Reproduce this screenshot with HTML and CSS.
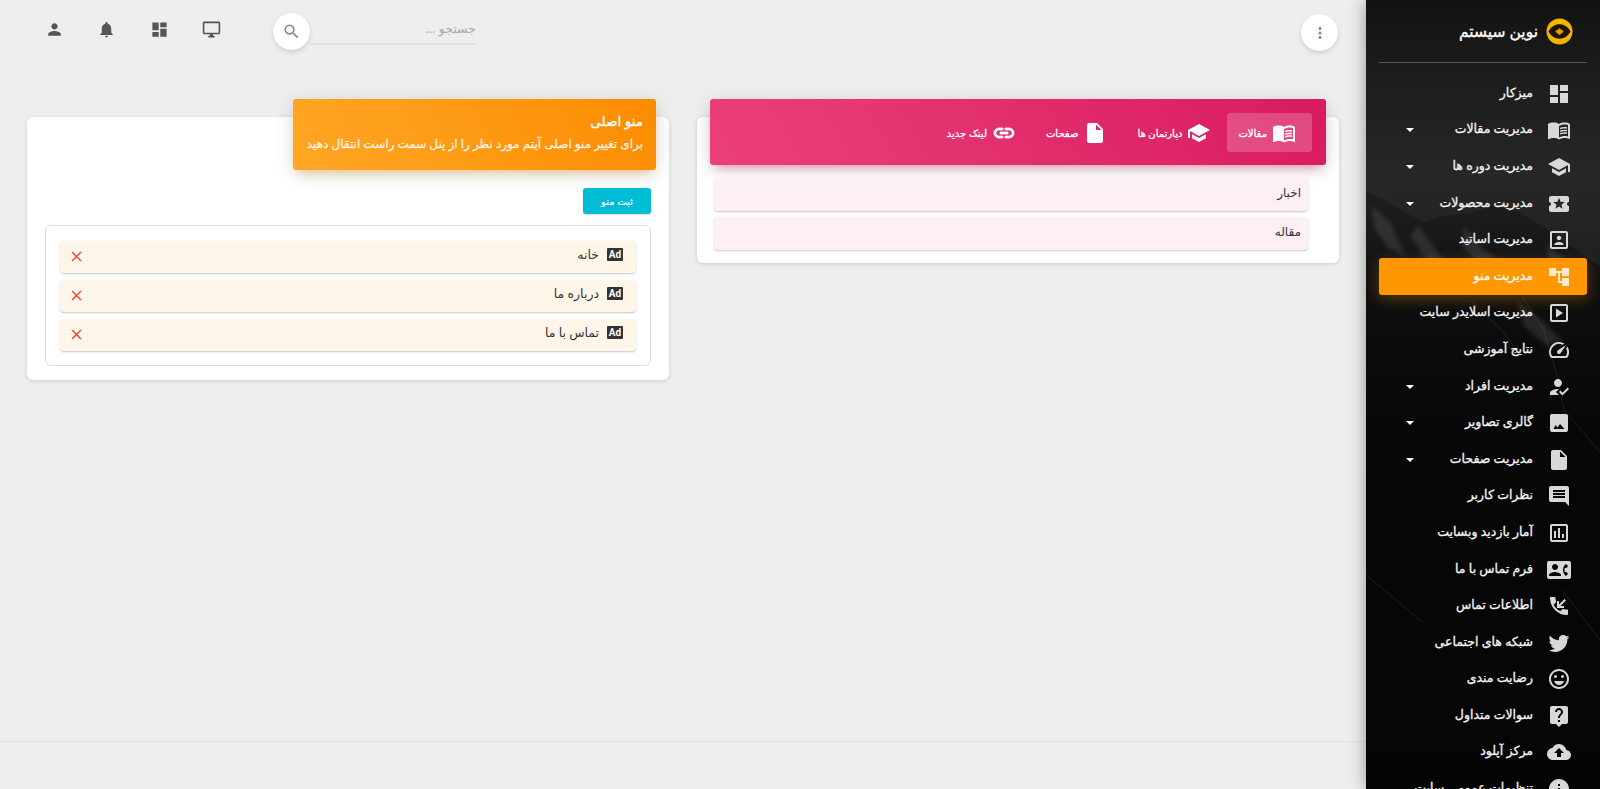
FILE: index.html
```html
<!DOCTYPE html>
<html lang="fa" dir="rtl">
<head>
    <meta charset="UTF-8">
    <title>مدیریت منو</title>
    <link rel="stylesheet" href="styles.css">
</head>
<body>
    <svg class="icon-defs" width="0" height="0">
        <symbol id="i-dashboard" viewBox="0 0 24 24"><path d="M3 13h8V3H3v10zm0 8h8v-6H3v6zm10 0h8V11h-8v10zm0-18v6h8V3h-8z"/></symbol>
        <symbol id="i-book" viewBox="0 0 24 24"><path d="M21 5c-1.11-.35-2.33-.5-3.5-.5-1.95 0-4.05.4-5.5 1.5-1.45-1.1-3.55-1.5-5.5-1.5S2.45 4.9 1 6v14.65c0 .25.25.5.5.5.1 0 .15-.05.25-.05C3.1 20.45 5.05 20 6.5 20c1.95 0 4.05.4 5.5 1.5 1.35-.85 3.8-1.5 5.5-1.5 1.65 0 3.35.3 4.75 1.05.1.05.15.05.25.05.25 0 .5-.25.5-.5V6c-.6-.45-1.25-.75-2-1zm0 13.5c-1.1-.35-2.3-.5-3.5-.5-1.7 0-4.15.65-5.5 1.5V8c1.35-.85 3.8-1.5 5.5-1.5 1.2 0 2.4.15 3.5.5v11.5z"/><path d="M17.5 10.500c.88 0 1.730.09 2.500.26V9.240c-.79-.15-1.640-.24-2.500-.24-1.700 0-3.240.29-4.500.83v1.660c1.130-.64 2.700-.99 4.500-.99zM13 12.490v1.660c1.130-.64 2.700-.99 4.500-.99.88 0 1.730.09 2.500.26V11.900c-.79-.15-1.640-.24-2.500-.24-1.700 0-3.240.3-4.500.83zM17.500 14.330c-1.700 0-3.240.29-4.500.83v1.660c1.130-.64 2.700-.99 4.500-.99.88 0 1.730.09 2.500.26v-1.520c-.79-.16-1.640-.24-2.500-.24z"/></symbol>
        <symbol id="i-school" viewBox="0 0 24 24"><path d="M5 13.18v4L12 21l7-3.82v-4L12 17l-7-3.82zM12 3L1 9l11 6 9-4.91V17h2V9L12 3z"/></symbol>
        <symbol id="i-ticket" viewBox="0 0 24 24"><path d="M20 12c0-1.1.9-2 2-2V6c0-1.1-.9-2-2-2H4c-1.1 0-1.99.9-1.99 2v4c1.1 0 1.99.9 1.99 2s-.89 2-2 2v4c0 1.1.9 2 2 2h16c1.1 0 2-.9 2-2v-4c-1.1 0-2-.9-2-2zm-4.42 4.8L12 14.5l-3.58 2.3 1.08-4.12-3.29-2.69 4.24-.25L12 5.8l1.54 3.95 4.24.25-3.29 2.69 1.09 4.11z"/></symbol>
        <symbol id="i-portrait" viewBox="0 0 24 24"><path d="M12 12.25c1.24 0 2.25-1.01 2.25-2.25S13.24 7.75 12 7.75 9.75 8.76 9.75 10s1.01 2.25 2.25 2.25zm4.5 4c0-1.5-3-2.25-4.5-2.25s-4.5.75-4.5 2.25V17h9v-.75zM19 3H5c-1.1 0-2 .9-2 2v14c0 1.1.9 2 2 2h14c1.1 0 2-.9 2-2V5c0-1.1-.9-2-2-2zm0 16H5V5h14v14z"/></symbol>
        <symbol id="i-tree" viewBox="0 0 24 24"><path d="M22 11V3h-7v3H9V3H2v8h7V8h2v10h4v3h7v-8h-7v3h-2V8h2v3z"/></symbol>
        <symbol id="i-slider" viewBox="0 0 24 24"><path d="M19 3H5c-1.1 0-2 .9-2 2v14c0 1.1.9 2 2 2h14c1.1 0 2-.9 2-2V5c0-1.1-.9-2-2-2zm0 16H5V5h14v14z"/><path d="M9 7.5v9l7-4.5z"/></symbol>
        <symbol id="i-speed" viewBox="0 0 24 24"><path d="M20.38 8.57l-1.23 1.85a8 8 0 0 1-.22 7.58H5.07A8 8 0 0 1 15.58 6.85l1.85-1.23A10 10 0 0 0 3.35 19a2 2 0 0 0 1.72 1h13.85a2 2 0 0 0 1.74-1 10 10 0 0 0-.27-10.44z"/><path d="M10.59 15.41a2 2 0 0 0 2.83 0l5.66-8.49-8.49 5.66a2 2 0 0 0 0 2.83z"/></symbol>
        <symbol id="i-person-check" viewBox="0 0 24 24"><path d="M9 17l3-2.94c-.39-.04-.68-.06-1-.06-2.67 0-8 1.34-8 4v2h9l-3-3zm2-5c2.21 0 4-1.79 4-4s-1.79-4-4-4-4 1.79-4 4 1.790 4 4 4z"/><path d="M15.470 20.500L12 17l1.400-1.410 2.070 2.080 5.130-5.170 1.400 1.410z"/></symbol>
        <symbol id="i-image" viewBox="0 0 24 24"><path d="M21 19V5c0-1.1-.9-2-2-2H5c-1.1 0-2 .9-2 2v14c0 1.1.9 2 2 2h14c1.1 0 2-.9 2-2zM8.500 14l2 2.500 2.500-3.500 4.500 5h-11z"/></symbol>
        <symbol id="i-file" viewBox="0 0 24 24"><path d="M6 2c-1.1 0-1.99.9-1.99 2L4 20c0 1.1.89 2 1.99 2H18c1.1 0 2-.9 2-2V8l-6-6H6zm7 7V3.5L18.5 9H13z"/></symbol>
        <symbol id="i-comment" viewBox="0 0 24 24"><path d="M21.99 4c0-1.1-.89-2-1.99-2H4c-1.1 0-2 .9-2 2v12c0 1.1.9 2 2 2h14l4 4-.01-18zM18 14H6v-2h12v2zm0-3H6V9h12v2zm0-3H6V6h12v2z"/></symbol>
        <symbol id="i-chart" viewBox="0 0 24 24"><path d="M19 3H5c-1.1 0-2 .9-2 2v14c0 1.1.9 2 2 2h14c1.1 0 2-.9 2-2V5c0-1.1-.9-2-2-2zm0 16H5V5h14v14zM7 10h2v7H7zm4-3h2v10h-2zm4 6h2v4h-2z"/></symbol>
        <symbol id="i-contact" viewBox="0 0 24 24"><path d="M22 3H2C.9 3 0 3.9 0 5v14c0 1.1.9 2 2 2h20c1.1 0 1.99-.9 1.99-2L24 5c0-1.1-.9-2-2-2zM8 6c1.66 0 3 1.34 3 3s-1.34 3-3 3-3-1.34-3-3 1.34-3 3-3zm6 12H2v-1c0-2 4-3.1 6-3.1s6 1.1 6 3.1v1zm3.85-4h1.64L21 16l-1.99 1.99c-1.31-.98-2.28-2.38-2.73-3.99-.18-.64-.28-1.31-.28-2s.1-1.36.28-2c.45-1.62 1.42-3.01 2.73-3.99L21 8l-1.51 2h-1.64c-.22.63-.35 1.3-.35 2s.13 1.37.35 2z"/></symbol>
        <symbol id="i-call" viewBox="0 0 24 24"><path d="M20 15.5c-1.25 0-2.45-.2-3.57-.57-.35-.11-.74-.03-1.02.24l-2.2 2.2c-2.83-1.44-5.15-3.75-6.59-6.59l2.2-2.21c.28-.26.36-.65.25-1C8.7 6.45 8.5 5.25 8.5 4c0-.55-.45-1-1-1H4c-.55 0-1 .45-1 1 0 9.39 7.61 17 17 17 .55 0 1-.45 1-1v-3.5c0-.55-.45-1-1-1z"/><path d="M19 6.41L17.59 5 12 10.59V7h-2v7h7v-2h-3.59z"/></symbol>
        <symbol id="i-twitter" viewBox="0 0 24 24"><path d="M22.46 6c-.77.35-1.6.58-2.46.69.88-.53 1.56-1.37 1.88-2.38-.83.5-1.75.85-2.72 1.05C18.37 4.5 17.26 4 16 4c-2.35 0-4.27 1.92-4.27 4.29 0 .34.04.67.11.98C8.28 9.09 5.11 7.38 3 4.79c-.37.63-.58 1.37-.58 2.15 0 1.49.75 2.81 1.91 3.56-.71 0-1.37-.2-1.95-.5v.03c0 2.08 1.48 3.82 3.44 4.21a4.22 4.22 0 0 1-1.93.07 4.28 4.28 0 0 0 4 2.98 8.521 8.521 0 0 1-5.33 1.84c-.34 0-.68-.02-1.02-.06C3.44 20.29 5.7 21 8.12 21 16 21 20.33 14.46 20.33 8.79c0-.19 0-.37-.01-.56.84-.6 1.56-1.36 2.14-2.23z"/></symbol>
        <symbol id="i-smile" viewBox="0 0 24 24"><circle cx="15.5" cy="9.5" r="1.5"/><circle cx="8.5" cy="9.5" r="1.5"/><path d="M11.99 2C6.47 2 2 6.48 2 12s4.47 10 9.99 10C17.52 22 22 17.52 22 12S17.52 2 11.99 2zM12 20c-4.42 0-8-3.58-8-8s3.58-8 8-8 8 3.58 8 8-3.58 8-8 8zm-5-6c.78 2.34 2.72 4 5 4s4.22-1.66 5-4H7z"/></symbol>
        <symbol id="i-question" viewBox="0 0 24 24"><path d="M19 2H5c-1.11 0-2 .9-2 2v14c0 1.1.89 2 2 2h4l3 3 3-3h4c1.1 0 2-.9 2-2V4c0-1.1-.9-2-2-2zm-6 16h-2v-2h2v2zm2.07-7.75l-.9.92C13.45 11.9 13 12.5 13 14h-2v-.5c0-1.1.45-2.1 1.17-2.83l1.24-1.26c.37-.36.59-.86.59-1.41 0-1.1-.9-2-2-2s-2 .9-2 2H8c0-2.21 1.79-4 4-4s4 1.79 4 4c0 .88-.36 1.68-.93 2.25z"/></symbol>
        <symbol id="i-upload" viewBox="0 0 24 24"><path d="M19.35 10.04A7.49 7.49 0 0 0 12 4C9.11 4 6.6 5.64 5.35 8.04A5.994 5.994 0 0 0 0 14c0 3.31 2.69 6 6 6h13c2.76 0 5-2.24 5-5 0-2.64-2.05-4.78-4.65-4.96zM14 13v4h-4v-4H7l5-5 5 5h-3z"/></symbol>
        <symbol id="i-info" viewBox="0 0 24 24"><path d="M12 2C6.48 2 2 6.48 2 12s4.48 10 10 10 10-4.48 10-10S17.52 2 12 2zm1 15h-2v-6h2v6zm0-8h-2V7h2v2z"/></symbol>
        <symbol id="i-link" viewBox="0 0 24 24"><path d="M3.9 12c0-1.71 1.39-3.1 3.1-3.1h4V7H7c-2.76 0-5 2.24-5 5s2.24 5 5 5h4v-1.9H7c-1.71 0-3.1-1.39-3.1-3.1zM8 13h8v-2H8v2zm9-6h-4v1.9h4c1.71 0 3.1 1.39 3.1 3.1s-1.39 3.1-3.1 3.1h-4V17h4c2.76 0 5-2.24 5-5s-2.24-5-5-5z"/></symbol>
        <symbol id="i-more" viewBox="0 0 24 24"><path d="M12 8c1.1 0 2-.9 2-2s-.9-2-2-2-2 .9-2 2 .9 2 2 2zm0 2c-1.1 0-2 .9-2 2s.9 2 2 2 2-.9 2-2-.9-2-2-2zm0 6c-1.1 0-2 .9-2 2s.9 2 2 2 2-.9 2-2-.9-2-2-2z"/></symbol>
        <symbol id="i-search" viewBox="0 0 24 24"><path d="M15.5 14h-.79l-.28-.27A6.471 6.471 0 0 0 16 9.5 6.5 6.5 0 1 0 9.5 16c1.61 0 3.09-.59 4.23-1.57l.27.28v.79l5 4.99L20.49 19l-4.99-5zm-6 0C7.01 14 5 11.99 5 9.5S7.01 5 9.5 5 14 7.01 14 9.5 11.99 14 9.5 14z"/></symbol>
        <symbol id="i-desktop" viewBox="0 0 24 24"><path d="M21 2H3c-1.1 0-2 .9-2 2v12c0 1.1.9 2 2 2h7v2H8v2h8v-2h-2v-2h7c1.1 0 2-.9 2-2V4c0-1.1-.9-2-2-2zm0 14H3V4h18v12z"/></symbol>
        <symbol id="i-bell" viewBox="0 0 24 24"><path d="M12 22c1.1 0 2-.9 2-2h-4c0 1.1.89 2 2 2zm6-6v-5c0-3.07-1.64-5.64-4.5-6.32V4c0-.83-.67-1.5-1.5-1.5s-1.5.67-1.5 1.5v.68C7.63 5.36 6 7.92 6 11v5l-2 2v1h16v-1l-2-2z"/></symbol>
        <symbol id="i-person" viewBox="0 0 24 24"><path d="M12 12c2.21 0 4-1.79 4-4s-1.79-4-4-4-4 1.79-4 4 1.79 4 4 4zm0 2c-2.67 0-8 1.34-8 4v2h16v-2c0-2.66-5.33-4-8-4z"/></symbol>
        <symbol id="i-close" viewBox="0 0 24 24"><path d="M19 6.41L17.59 5 12 10.59 6.41 5 5 6.41 10.59 12 5 17.59 6.41 19 12 13.41 17.59 19 19 17.59 13.41 12z"/></symbol>
    </svg>

    <!-- Side menu -->
    <aside class="sidebar">
        <svg class="sidebar-bg" viewBox="0 0 234 789">
            <defs>
                <linearGradient id="rock" x1="0" y1="0" x2="0" y2="1">
                    <stop offset="0" stop-color="#1e1e1e"/>
                    <stop offset=".2" stop-color="#0e0e0e"/>
                    <stop offset=".4" stop-color="#070707"/>
                    <stop offset="1" stop-color="#050505"/>
                </linearGradient>
            </defs>
            <polygon class="bg-rock" points="0,192 16,198 38,212 58,222 76,216 104,213 128,206 150,210 176,226 204,246 234,266 234,789 0,789" fill="url(#rock)"/>
            <!-- snow on the ridge -->
            <g class="bg-snow">
                <polygon points="52,226 66,244 82,268 74,280 58,256 44,236"/>
                <polygon points="98,226 118,250 150,272 176,280 154,290 120,272 96,246"/>
                <polygon points="180,242 206,268 224,288 204,286 184,264"/>
                <polygon points="6,206 24,222 40,256 22,248 8,228"/>
                <polygon points="150,300 178,322 196,340 180,346 158,326"/>
            </g>
            <g class="bg-lines" fill="none">
                <polyline points="156,296 178,330 190,372 198,410 234,452"/>
                <polyline points="104,300 136,330 152,352"/>
                <polyline points="0,575 30,600 56,622"/>
                <polyline points="196,590 234,640"/>
            </g>
        </svg>
        <div class="brand">
            <svg class="brand-logo" viewBox="0 0 28 28">
                <circle cx="14" cy="14" r="13.5" fill="#f4b400"/>
                <path d="M2.500 14c3-5 7-7.500 11.500-7.500S22.500 9 25.500 14c-3 5-7 7.500-11.500 7.500S5.500 19 2.500 14z" fill="#1d1606"/>
                <path d="M9.500 14l4.500-3.500 4.500 3.500-4.500 3.500z" fill="#f49a00"/>
            </svg>
            <span class="brand-name">نوین سیستم</span>
        </div>
        <nav class="side-menu">
            <a class="side-item"><svg class="side-icon"><use href="#i-dashboard"/></svg><span>میزکار</span></a>
            <a class="side-item has-sub"><svg class="side-icon"><use href="#i-book"/></svg><span>مدیریت مقالات</span></a>
            <a class="side-item has-sub"><svg class="side-icon"><use href="#i-school"/></svg><span>مدیریت دوره ها</span></a>
            <a class="side-item has-sub"><svg class="side-icon"><use href="#i-ticket"/></svg><span>مدیریت محصولات</span></a>
            <a class="side-item"><svg class="side-icon"><use href="#i-portrait"/></svg><span>مدیریت اساتید</span></a>
            <a class="side-item active"><svg class="side-icon"><use href="#i-tree"/></svg><span>مدیریت منو</span></a>
            <a class="side-item"><svg class="side-icon"><use href="#i-slider"/></svg><span>مدیریت اسلایدر سایت</span></a>
            <a class="side-item"><svg class="side-icon"><use href="#i-speed"/></svg><span>نتایج آموزشی</span></a>
            <a class="side-item has-sub"><svg class="side-icon"><use href="#i-person-check"/></svg><span>مدیریت افراد</span></a>
            <a class="side-item has-sub"><svg class="side-icon"><use href="#i-image"/></svg><span>گالری تصاویر</span></a>
            <a class="side-item has-sub"><svg class="side-icon"><use href="#i-file"/></svg><span>مدیریت صفحات</span></a>
            <a class="side-item"><svg class="side-icon"><use href="#i-comment"/></svg><span>نظرات کاربر</span></a>
            <a class="side-item"><svg class="side-icon"><use href="#i-chart"/></svg><span>آمار بازدید وبسایت</span></a>
            <a class="side-item"><svg class="side-icon"><use href="#i-contact"/></svg><span>فرم تماس با ما</span></a>
            <a class="side-item"><svg class="side-icon"><use href="#i-call"/></svg><span>اطلاعات تماس</span></a>
            <a class="side-item"><svg class="side-icon"><use href="#i-twitter"/></svg><span>شبکه های اجتماعی</span></a>
            <a class="side-item"><svg class="side-icon"><use href="#i-smile"/></svg><span>رضایت مندی</span></a>
            <a class="side-item"><svg class="side-icon"><use href="#i-question"/></svg><span>سوالات متداول</span></a>
            <a class="side-item"><svg class="side-icon"><use href="#i-upload"/></svg><span>مرکز آپلود</span></a>
            <a class="side-item"><svg class="side-icon"><use href="#i-info"/></svg><span>تنظیمات عمومی سایت</span></a>
        </nav>
    </aside>

    <main class="main">
        <!-- Top bar -->
        <header class="topbar">
            <button class="round-btn more-btn"><svg class="more-icon"><use href="#i-more"/></svg></button>
            <div class="topbar-left">
                <div class="search">
                    <span class="search-input">جستجو ...</span>
                    <button class="round-btn"><svg class="search-icon"><use href="#i-search"/></svg></button>
                </div>
                <div class="top-icons">
                    <svg class="top-icon"><use href="#i-desktop"/></svg>
                    <svg class="top-icon"><use href="#i-dashboard"/></svg>
                    <svg class="top-icon"><use href="#i-bell"/></svg>
                    <svg class="top-icon"><use href="#i-person"/></svg>
                </div>
            </div>
        </header>

        <div class="content">
            <!-- Menu sources -->
            <section class="card">
                <div class="card-header pink">
                    <ul class="tabs">
                        <li class="tab active"><svg class="tab-icon"><use href="#i-book"/></svg>مقالات</li>
                        <li class="tab"><svg class="tab-icon flip"><use href="#i-school"/></svg>دپارتمان ها</li>
                        <li class="tab"><svg class="tab-icon"><use href="#i-file"/></svg>صفحات</li>
                        <li class="tab"><svg class="tab-icon thick"><use href="#i-link"/></svg>لینک جدید</li>
                    </ul>
                </div>
                <div class="source-list">
                    <div class="source-item">اخبار</div>
                    <div class="source-item">مقاله</div>
                </div>
            </section>

            <!-- Main menu -->
            <section class="card">
                <div class="card-header orange">
                    <h4 class="header-title">منو اصلی</h4>
                    <p class="header-sub">برای تغییر منو اصلی آیتم مورد نظر را از پنل سمت راست انتقال دهید</p>
                </div>
                <div class="card-body">
                    <div class="form-actions"><button class="save-btn">ثبت منو</button></div>
                    <div class="menu-box">
                        <div class="menu-row"><span class="ad-badge">Ad</span><span class="menu-label">خانه</span><svg class="remove"><use href="#i-close"/></svg></div>
                        <div class="menu-row"><span class="ad-badge">Ad</span><span class="menu-label">درباره ما</span><svg class="remove"><use href="#i-close"/></svg></div>
                        <div class="menu-row"><span class="ad-badge">Ad</span><span class="menu-label">تماس با ما</span><svg class="remove"><use href="#i-close"/></svg></div>
                    </div>
                </div>
            </section>
        </div>

        <footer class="footer"></footer>
    </main>
</body>
</html>
```

FILE: styles.css
```css
* {
    box-sizing: border-box;
}

body {
    margin: 0;
    height: 789px;
    overflow: hidden;
    display: flex;
    font-family: "Noto Sans", "DejaVu Sans", sans-serif;
    font-size: 13px;
    color: #333;
    background-color: #eeeeee;
}

.icon-defs {
    position: absolute;
}

button {
    font-family: inherit;
    border: none;
    padding: 0;
}

/* Side menu */
.sidebar {
    position: relative;
    z-index: 2;
    width: 234px;
    height: 789px;
    flex-shrink: 0;
    overflow: hidden;
    background: linear-gradient(to bottom, #121212 0, #1d1d1d 80px, #272727 180px, #1c1c1c 300px);
    box-shadow: 0 0 16px rgba(0, 0, 0, 0.4);
    color: #fff;
}

.sidebar-bg {
    position: absolute;
    top: 0;
    left: 0;
    width: 234px;
    height: 789px;
}

.bg-snow {
    fill: #a8a8a8;
    opacity: 0.16;
    filter: blur(2px);
}

.bg-lines {
    stroke: #777;
    stroke-width: 1;
    opacity: 0.2;
}

.brand {
    position: relative;
    display: flex;
    align-items: center;
    gap: 8px;
    height: 63px;
    margin: 0 13px;
    padding-right: 14px;
    border-bottom: 1px solid rgba(180, 180, 180, 0.4);
}

.brand-logo {
    width: 27px;
    height: 27px;
}

.brand-name {
    font-size: 15.5px;
    -webkit-text-stroke: 0.35px #fff;
}

.side-menu {
    position: relative;
    padding-top: 12.5px;
}

.side-item {
    position: relative;
    display: flex;
    align-items: center;
    gap: 14px;
    height: 36.6px;
    margin: 0 13px;
    padding-right: 16px;
    font-size: 12.5px;
    white-space: nowrap;
    color: #f5f5f5;
    -webkit-text-stroke: 0.3px #f5f5f5;
    border-radius: 3px;
}

.side-item span {
    margin-top: -3px;
}

.side-icon {
    width: 24px;
    height: 24px;
    fill: #d8d8d8;
    flex-shrink: 0;
}

.side-item.has-sub::after {
    content: "";
    position: absolute;
    left: 27px;
    top: 50%;
    margin-top: -2px;
    border-top: 4px solid #fff;
    border-left: 4px solid transparent;
    border-right: 4px solid transparent;
}

.side-item.active {
    background-color: #ff9800;
    color: #fff;
    box-shadow: 0 4px 14px rgba(255, 152, 0, 0.3);
}

.side-item.active .side-icon {
    fill: rgba(255, 255, 255, 0.8);
}

/* Main column */
.main {
    position: relative;
    flex: 1;
    min-width: 0;
}

.topbar {
    display: flex;
    align-items: flex-start;
    justify-content: space-between;
    height: 117px;
    padding: 13px 28px 0 45px;
}

.topbar-left {
    display: flex;
    align-items: flex-start;
    gap: 52px;
}

.round-btn {
    display: flex;
    align-items: center;
    justify-content: center;
    width: 37px;
    height: 37px;
    border-radius: 50%;
    background-color: #fff;
    box-shadow: 0 2px 5px rgba(0, 0, 0, 0.14);
}

.more-btn {
    margin-top: 1px;
}

.more-icon {
    width: 18px;
    height: 18px;
    fill: #888;
}

.search {
    display: flex;
    align-items: flex-start;
}

.search-input {
    width: 166px;
    height: 32px;
    line-height: 32px;
    font-size: 12.5px;
    color: #aaa;
    border-bottom: 2px solid #e0e0e0;
}

.search-icon {
    width: 19px;
    height: 19px;
    fill: #888;
}

.top-icons {
    display: flex;
    align-items: center;
    gap: 33.3px;
    padding-top: 6.5px;
}

.top-icon {
    width: 19px;
    height: 19px;
    fill: #555;
}

.content {
    display: grid;
    grid-template-columns: 642px 642px;
    gap: 28px;
    padding: 0 27px;
    align-items: start;
}

.card {
    background-color: #fff;
    border-radius: 6px;
    box-shadow: 0 1px 4px rgba(0, 0, 0, 0.14);
}

.card-header {
    margin: -18px 13px 0;
    border-radius: 3px;
    color: #fff;
}

.card-header.pink {
    height: 66px;
    padding: 14px;
    background: linear-gradient(60deg, #ec407a, #d81b60);
    box-shadow: 0 4px 20px rgba(0, 0, 0, 0.14), 0 7px 10px -5px rgba(233, 30, 99, 0.4);
}

.card-header.orange {
    width: 363px;
    height: 71px;
    padding: 13px 13px;
    background: linear-gradient(60deg, #ffa726, #fb8c00);
    box-shadow: 0 4px 20px rgba(0, 0, 0, 0.14), 0 7px 10px -5px rgba(255, 152, 0, 0.4);
}

.tabs {
    display: flex;
    margin: 0;
    padding: 0;
    list-style: none;
}

.tab {
    display: flex;
    align-items: center;
    gap: 5px;
    height: 39px;
    padding: 0 16px 0 14px;
    border-radius: 3px;
    font-size: 10px;
    -webkit-text-stroke: 0.3px #fff;
}

.tab.active {
    padding-left: 11px;
    background-color: rgba(255, 255, 255, 0.2);
}

.tab-icon {
    width: 24px;
    height: 24px;
    fill: #fff;
}

.tab-icon.flip {
    transform: scaleX(-1);
}

.tab-icon.thick {
    stroke: #fff;
    stroke-width: 0.8;
}

.source-list {
    display: flex;
    flex-direction: column;
    gap: 6px;
    padding: 13px 31px 13px 17px;
}

.source-item {
    height: 33px;
    padding: 0 7px;
    line-height: 29px;
    font-size: 12px;
    border-radius: 4px;
    background-color: #fcf0f4;
    box-shadow: 0 1px 2px rgba(0, 0, 0, 0.22);
}

.header-title {
    margin: 0 0 4px;
    font-size: 13.5px;
    line-height: 19px;
    font-weight: 400;
    -webkit-text-stroke: 0.3px #fff;
}

.header-sub {
    margin: 0;
    font-size: 12px;
    line-height: 18px;
    color: rgba(255, 255, 255, 0.85);
    -webkit-text-stroke: 0.3px rgba(255, 255, 255, 0.85);
}

.card-body {
    padding: 18px 18px 14px 18px;
}

.form-actions {
    display: flex;
    margin-bottom: 11px;
}

.save-btn {
    width: 68px;
    height: 26px;
    border-radius: 3px;
    background-color: #00bcd4;
    color: #fff;
    font-size: 10px;
    -webkit-text-stroke: 0.2px #fff;
    box-shadow: 0 1px 2px rgba(0, 0, 0, 0.15);
}

.menu-box {
    display: flex;
    flex-direction: column;
    gap: 7px;
    padding: 15px 14px 14px;
    border: 1px solid #dcdfe3;
    border-radius: 6px;
}

.menu-row {
    display: flex;
    align-items: flex-start;
    height: 32px;
    padding: 7px 13px 0 8px;
    border-radius: 4px;
    background-color: #fff6ea;
    box-shadow: 0 1px 2px rgba(0, 0, 0, 0.22);
    font-size: 12.5px;
    line-height: 15px;
}

.ad-badge {
    width: 16px;
    height: 13px;
    border-radius: 1px;
    background-color: #333;
    color: #fff;
    font-family: "Roboto", sans-serif;
    font-size: 10px;
    font-weight: 700;
    line-height: 13px;
    text-align: center;
}

.menu-label {
    margin-top: -1px;
    margin-right: 8px;
}

.remove {
    width: 17px;
    height: 17px;
    margin-right: auto;
    fill: #f44336;
}

.footer {
    position: absolute;
    right: 0;
    left: 0;
    top: 741px;
    border-top: 1px solid #e2e2e2;
}
```
